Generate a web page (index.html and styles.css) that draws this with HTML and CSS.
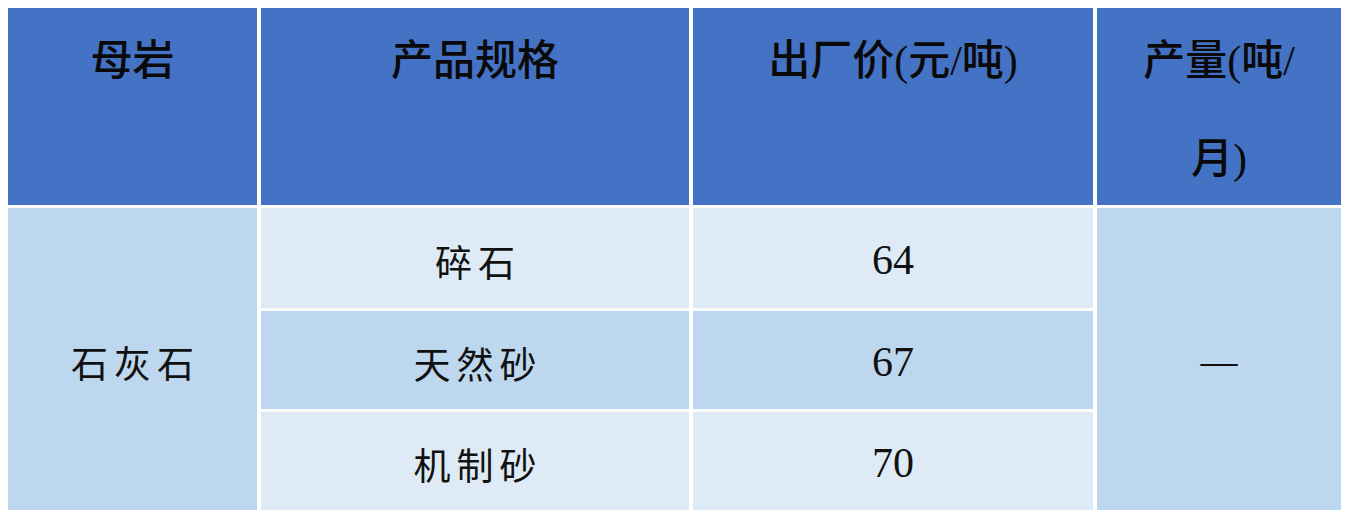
FILE: index.html
```html
<!DOCTYPE html>
<html lang="zh-CN">
<head>
<meta charset="utf-8">
<title>石灰石产品价格</title>
<link rel="stylesheet" href="styles.css">
</head>
<body>
<div class="table">
  <div class="cell head">母岩</div>
  <div class="cell head">产品规格</div>
  <div class="cell head">出厂价(元/吨)</div>
  <div class="cell head">产量(吨/<br>月)</div>

  <div class="cell rock">石灰石</div>
  <div class="cell spec pale">碎石</div>
  <div class="cell num pale">64</div>
  <div class="cell out">—</div>

  <div class="cell spec mid">天然砂</div>
  <div class="cell num mid">67</div>

  <div class="cell spec pale">机制砂</div>
  <div class="cell num pale">70</div>
</div>
</body>
</html>
```

FILE: styles.css
```css
html, body {
  margin: 0;
  padding: 0;
  background: #ffffff;
}

.table {
  margin: 8px;
  width: 1333px;
  display: grid;
  grid-template-columns: 249px 428px 400px 244px;
  grid-template-rows: 197px 100px 98px 98px;
  column-gap: 4px;
  row-gap: 3px;
  color: #111111;
}

.cell {
  display: flex;
  justify-content: center;
  align-items: center;
  text-align: center;
}

.head {
  background: #4472c4;
  align-items: flex-start;
  padding-top: 4px;
  font-family: "Liberation Serif", "Noto Sans CJK SC", serif;
  font-weight: 500;
  font-size: 42px;
  line-height: 98px;
  color: #0a0a0a;
  overflow: visible;
  height: 197px;
  box-sizing: border-box;
}

.rock {
  grid-row: span 3;
  background: #bdd7ee;
  font-family: "Noto Sans CJK SC", sans-serif;
  font-size: 37px;
  letter-spacing: 6px;
  padding-left: 6px;
  padding-top: 5px;
  box-sizing: border-box;
}

.out {
  grid-row: span 3;
  background: #bdd7ee;
  font-family: "Liberation Serif", serif;
  font-size: 37px;
  padding-top: 4px;
  box-sizing: border-box;
}

.spec {
  font-family: "Noto Sans CJK SC", sans-serif;
  font-size: 37px;
  letter-spacing: 6px;
  padding-left: 6px;
  padding-top: 6px;
  box-sizing: border-box;
}

.num {
  font-family: "Liberation Serif", serif;
  font-size: 42px;
  padding-top: 4px;
  box-sizing: border-box;
}

.pale {
  background: #deebf7;
}

.mid {
  background: #bdd7ee;
}
```
